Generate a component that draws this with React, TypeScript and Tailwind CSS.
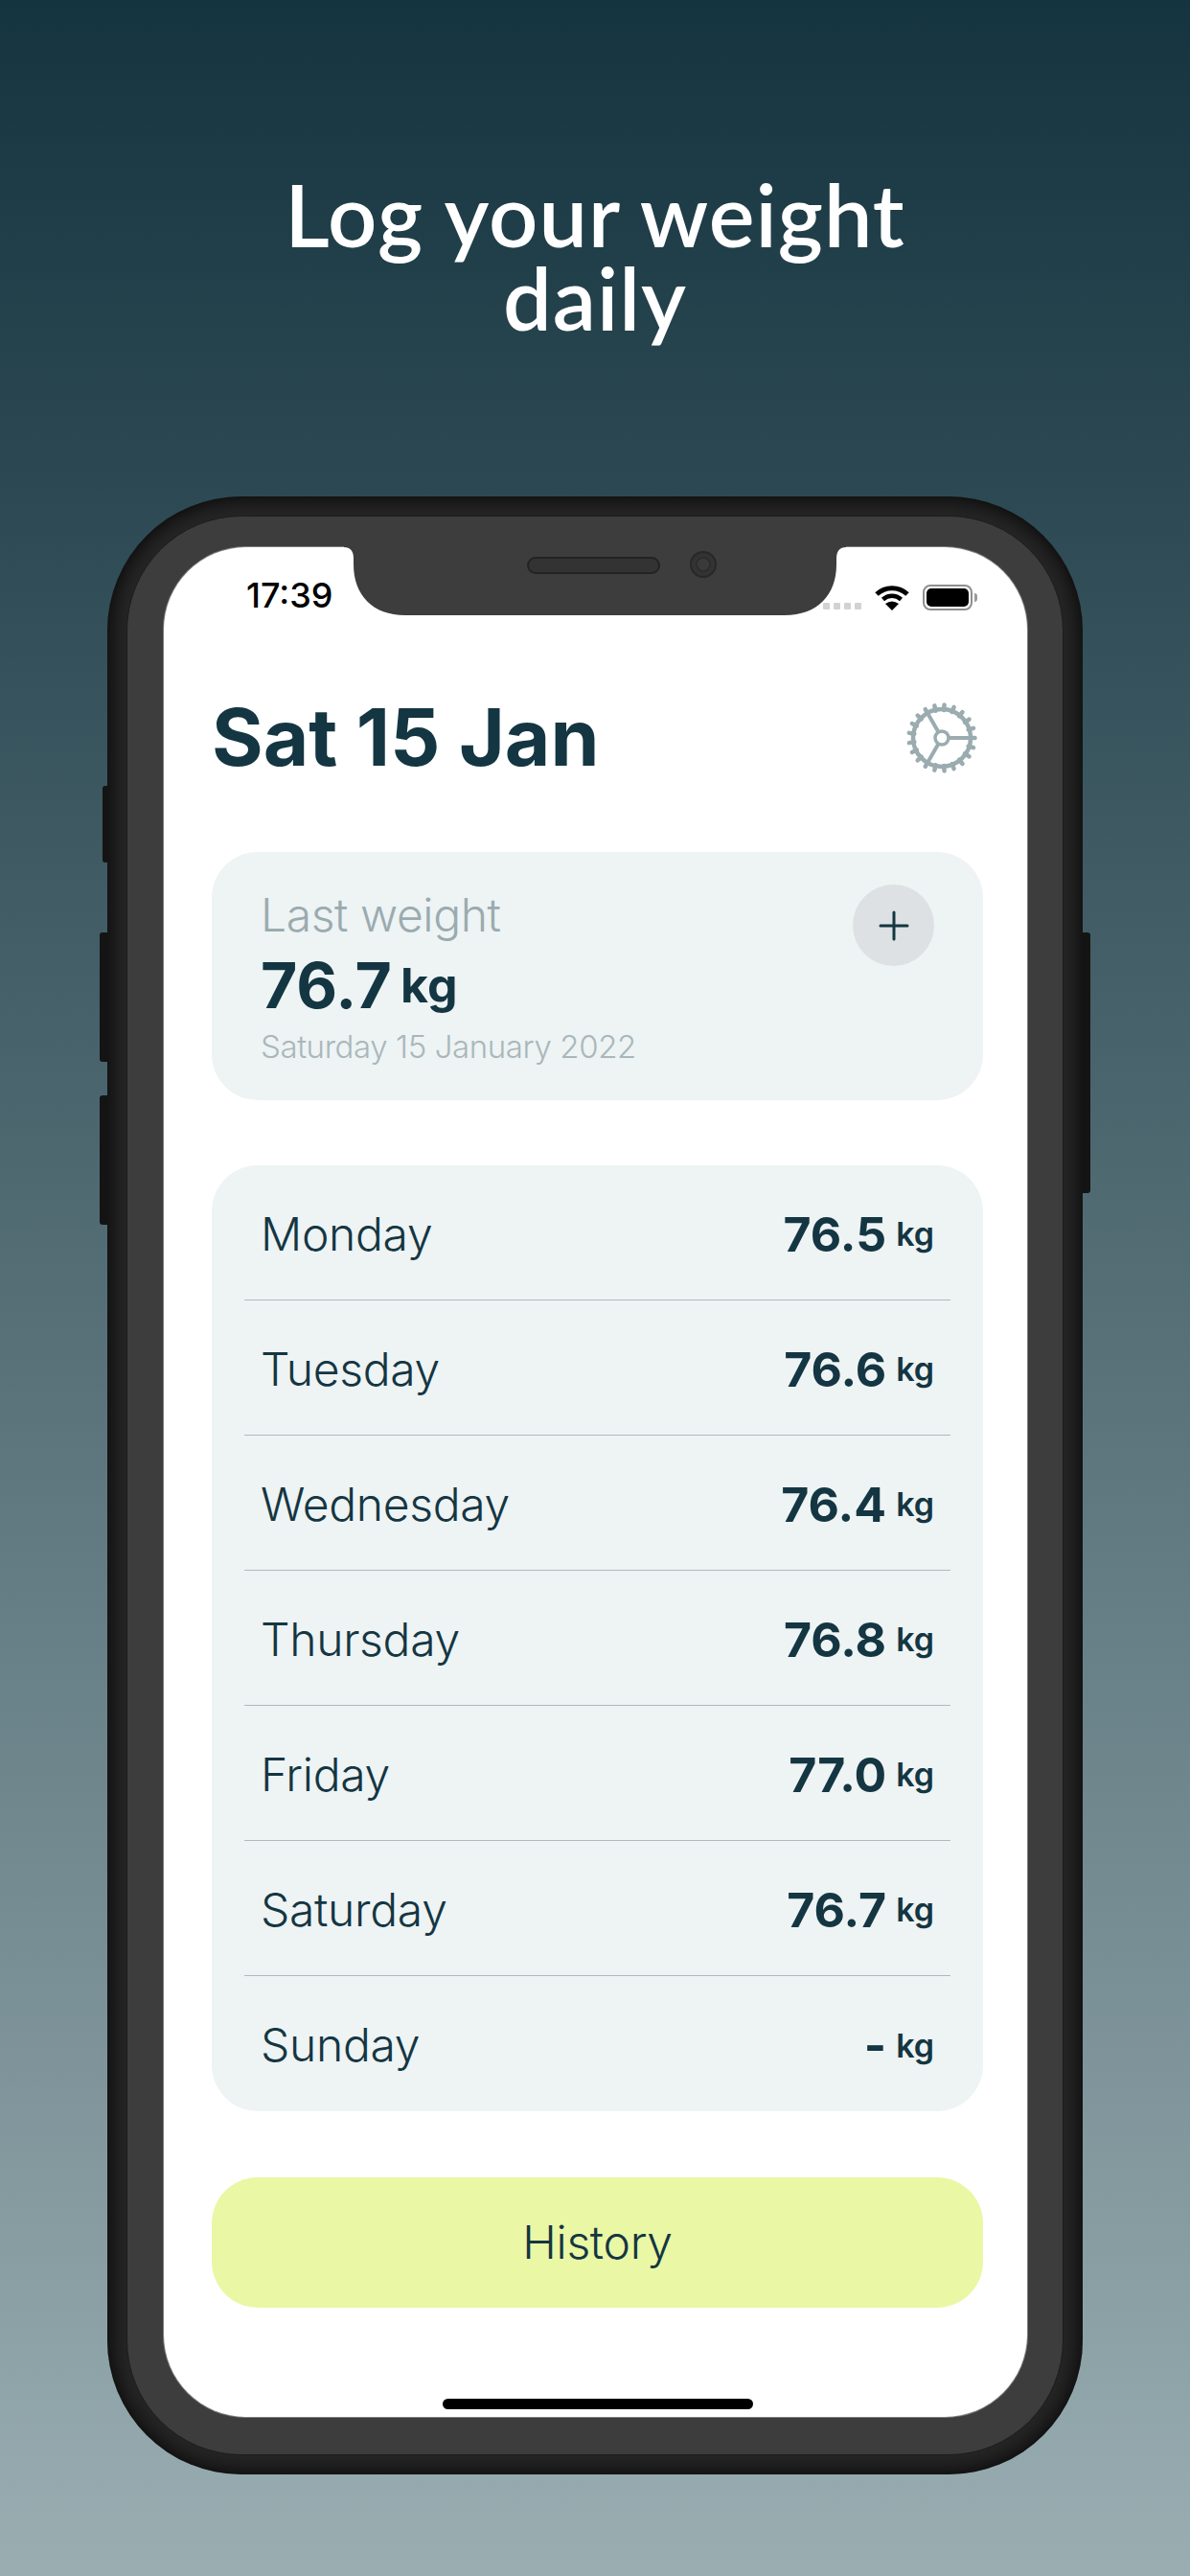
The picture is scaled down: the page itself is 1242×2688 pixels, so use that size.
import React from 'react';
import { Plus } from 'lucide-react';

const WEEK = [
  { day: 'Monday', value: '76.5' },
  { day: 'Tuesday', value: '76.6' },
  { day: 'Wednesday', value: '76.4' },
  { day: 'Thursday', value: '76.8' },
  { day: 'Friday', value: '77.0' },
  { day: 'Saturday', value: '76.7' },
  { day: 'Sunday', value: '-' },
];

function Notch() {
  return (
    <svg width="524" height="73" viewBox="0 -1 524 73" className="absolute -top-px left-[188px] z-10">
      <path
        d="M0 -1 H524 V0 Q514 0 514 12 V18 C514 50 494 71 460 71 H64 C30 71 10 50 10 18 V12 Q10 0 0 0 Z"
        fill="#3d3d3d"
      />
      <rect x="192" y="11" width="137" height="16" rx="8" fill="#333333" stroke="#232323" strokeWidth="2" />
      <circle cx="375" cy="18" r="13" fill="#333333" stroke="#282828" strokeWidth="2" />
      <circle cx="375" cy="18" r="7" fill="#3a3a3a" stroke="#2b2b2b" strokeWidth="1.5" />
    </svg>
  );
}

function Wifi() {
  return (
    <svg width="36" height="27" viewBox="0 0 36 27" fill="none">
      <path d="M2 10 C11 1.5 25 1.5 34 10" stroke="#000" strokeWidth="5" />
      <path d="M8.5 15.5 C14 10.5 22 10.5 27.5 15.5" stroke="#000" strokeWidth="4.5" />
      <path d="M18 27 L11 20 Q18 15 25 20 Z" fill="#000" />
    </svg>
  );
}

function Battery() {
  return (
    <div className="flex items-center gap-[2px]">
      <div className="flex h-[27px] w-[52px] rounded-[8px] border-2 border-[#8f8f8f] p-[2px]">
        <div className="flex-1 rounded-[5px] bg-black" />
      </div>
      <div className="h-[9px] w-[3px] rounded-r-full bg-[#9a9a9a]" />
    </div>
  );
}

function Gear() {
  const teeth = Array.from({ length: 21 }, (_, i) => (i * 360) / 21);
  return (
    <svg width="74" height="74" viewBox="0 0 74 74" fill="none" stroke="#9aacb0">
      {teeth.map((deg) => (
        <line
          key={deg}
          x1="66"
          y1="37"
          x2="71.5"
          y2="37"
          strokeWidth="4.5"
          strokeLinecap="round"
          transform={`rotate(${deg} 37 37)`}
        />
      ))}
      <circle cx="37" cy="37" r="30" strokeWidth="4.5" />
      <path d="M44 37 H66 M33.5 43 L22 63 M33.5 31 L22 11" strokeWidth="4" />
      <circle cx="37" cy="37" r="7" strokeWidth="3.5" fill="#fff" />
    </svg>
  );
}

function Row({ day, value, last }: { day: string; value: string; last: boolean }) {
  return (
    <div className={`mx-[34px] flex h-[141px] items-center justify-between pt-[3px] pr-[17px] pl-[17px] ${last ? '' : 'border-b border-[#adbabd]'}`}>
      <span className="text-[48px] leading-[70px] font-[350] tracking-[-0.3px] text-[#143642]">{day}</span>
      <span className="flex items-center gap-[10px] text-[#143642]">
        <span className="text-[50px] leading-[70px] font-bold">{value}</span>
        <span className="text-[34px] font-semibold">kg</span>
      </span>
    </div>
  );
}

export default function App() {
  return (
    <div className="flex h-[2688px] w-[1242px] flex-col items-center overflow-hidden bg-linear-to-b from-[#14343f] to-[#9aaeb2] font-[Inter,sans-serif]">
      <h1 className="w-[800px] pt-[180px] text-center font-[Lato,sans-serif] text-[90px] leading-[87px] font-semibold tracking-[1px] text-white">
        Log your weight daily
      </h1>

      {/* phone */}
      <div className="relative mt-[164px] h-[2064px] w-[1018px] rounded-[140px] bg-[#262626] p-[20px] shadow-[inset_0_0_24px_#000000]">
        <div className="absolute -left-[5px] top-[302px] h-[80px] w-[6px] rounded-l-[3px] bg-[#141414]" />
        <div className="absolute -left-[8px] top-[455px] h-[135px] w-[9px] rounded-l-[3px] bg-[#141414]" />
        <div className="absolute -left-[8px] top-[625px] h-[135px] w-[9px] rounded-l-[3px] bg-[#141414]" />
        <div className="absolute -right-[8px] top-[455px] h-[272px] w-[9px] rounded-r-[3px] bg-[#141414]" />

        <div className="h-full rounded-[120px] border border-[#1c1c1c] bg-[#3d3d3d] pt-[32px] pr-[37px] pb-[39px] pl-[38px]">
          <div className="relative h-full rounded-[86px] bg-white shadow-[0_0_0_1px_#7d7d7d]">
            <Notch />

            <div className="flex h-[72px] items-end justify-between pr-[52px] pb-[6px] pl-[86px]">
              <span className="-mb-[5px] text-[36px] leading-[42px] font-medium text-black">17:39</span>
              <div className="flex items-center gap-[14px]">
                <div className="flex gap-[4px] self-end pb-[1px]">
                  <div className="h-[7px] w-[7px] rounded-[1px] bg-[#d2d2d2]" />
                  <div className="h-[7px] w-[7px] rounded-[1px] bg-[#d2d2d2]" />
                  <div className="h-[7px] w-[7px] rounded-[1px] bg-[#d2d2d2]" />
                  <div className="h-[7px] w-[7px] rounded-[1px] bg-[#d2d2d2]" />
                </div>
                <Wifi />
                <Battery />
              </div>
            </div>

            <div className="pr-[46px] pl-[50px]">
              <div className="mt-[77px] flex h-[100px] items-center justify-between pr-[6px]">
                <h2 className="text-[82px] leading-[100px] font-bold text-[#143642]">Sat 15 Jan</h2>
                <Gear />
              </div>

              <div className="mt-[69px] flex h-[259px] items-start justify-between rounded-[48px] bg-[#eef3f4] pt-[34px] pr-[51px] pl-[51px]">
                <div className="pt-[3px]">
                  <p className="text-[48px] leading-[58px] font-light tracking-[-0.4px] text-[#9aabaf]">Last weight</p>
                  <p className="mt-[8px] flex items-center gap-[9px] leading-[72px] font-bold text-[#143642]">
                    <span className="text-[66px]">76.7</span>
                    <span className="text-[50px]">kg</span>
                  </p>
                  <p className="mt-[7px] text-[33px] leading-[42px] font-light tracking-[-0.4px] text-[#a9b7ba]">
                    Saturday 15 January 2022
                  </p>
                </div>
                <button className="flex h-[85px] w-[85px] items-center justify-center rounded-full bg-[#dde1e3]">
                  <Plus size={48} strokeWidth={1.5} color="#143642" />
                </button>
              </div>

              <div className="mt-[68px] rounded-[48px] bg-[#eef3f4]">
                {WEEK.map((row, i) => (
                  <Row key={row.day} day={row.day} value={row.value} last={i === WEEK.length - 1} />
                ))}
              </div>

              <button className="mt-[69px] flex h-[136px] w-full items-center justify-center rounded-[48px] bg-[#eaf7a4] text-[48px] font-[350] tracking-[-0.3px] text-[#143642]">
                History
              </button>

              <div className="mx-auto mt-[95px] h-[11px] w-[324px] rounded-full bg-black" />
            </div>
          </div>
        </div>
      </div>
    </div>
  );
}
